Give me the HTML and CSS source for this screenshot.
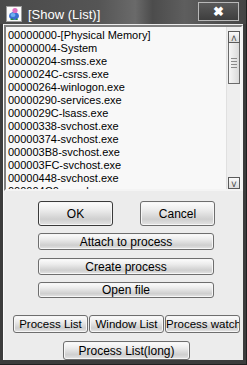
FILE: index.html
```html
<!DOCTYPE html>
<html lang="en">
<head>
    <meta charset="UTF-8">
    <title>[Show (List)]</title>
    <link rel="stylesheet" href="styles.css">
</head>
<body>
    <div class="window">
        <div class="titlebar">
            <div class="app-icon">
                <svg width="16" height="16" viewBox="0 0 16 16">
                    <rect x="0.5" y="0.5" width="15" height="15" fill="#fbfbfb" stroke="#9a9a9a"/>
                    <ellipse cx="8" cy="10" rx="5" ry="4" fill="#3a6fd0"/>
                    <ellipse cx="7" cy="9" rx="2.5" ry="2" fill="#6fb0f0"/>
                    <circle cx="9" cy="4.5" r="2.6" fill="#e070c0"/>
                    <path d="M4 14 L6 12 L8 14 Z" fill="#2a9040"/>
                    <path d="M9 14 L11 12 L12 14 Z" fill="#2a9040"/>
                </svg>
            </div>
            <div class="title">[Show (List)]</div>
            <div class="close-btn">&#x2716;</div>
        </div>
        <div class="client">
            <div class="listbox">
                <div class="items">
                    <div>00000000-[Physical Memory]</div>
                    <div>00000004-System</div>
                    <div>00000204-smss.exe</div>
                    <div>0000024C-csrss.exe</div>
                    <div>00000264-winlogon.exe</div>
                    <div>00000290-services.exe</div>
                    <div>0000029C-lsass.exe</div>
                    <div>00000338-svchost.exe</div>
                    <div>00000374-svchost.exe</div>
                    <div>000003B8-svchost.exe</div>
                    <div>000003FC-svchost.exe</div>
                    <div>00000448-svchost.exe</div>
                    <div>000004C0-spoolsv.exe</div>
                </div>
                <div class="scrollbar">
                    <div class="arrow">&#x02C4;</div>
                    <div class="thumb"><span></span><span></span><span></span><span></span></div>
                    <div class="track"></div>
                    <div class="arrow">&#x02C5;</div>
                </div>
            </div>
            <div class="row ok-row">
                <button class="btn default small">OK</button>
                <button class="btn small">Cancel</button>
            </div>
            <div class="row"><button class="btn wide attach">Attach to process</button></div>
            <div class="row"><button class="btn wide create">Create process</button></div>
            <div class="row"><button class="btn wide open">Open file</button></div>
            <div class="row tabs">
                <button class="btn tab">Process List</button>
                <button class="btn tab">Window List</button>
                <button class="btn tab">Process watch</button>
            </div>
            <div class="row"><button class="btn long">Process List(long)</button></div>
        </div>
    </div>
</body>
</html>
```

FILE: styles.css
```css
body {
    margin: 0;
    padding: 0;
    background: #3c3c3c;
    font-family: "Liberation Sans", Arial, sans-serif;
}
.window {
    width: 247px;
    height: 365px;
    display: flex;
    flex-direction: column;
    background: #3c3c3c;
    box-sizing: border-box;
    border-right: 1px solid #202020;
    border-bottom: 1px solid #202020;
}
.titlebar {
    height: 24px;
    display: flex;
    align-items: center;
    background: linear-gradient(90deg, #4a4a4a 0%, #555 40%, #6a6a6a 55%, #4c4c4c 62%, #5e5e5e 75%, #444 100%);
    flex-shrink: 0;
}
.app-icon {
    width: 16px;
    height: 16px;
    margin-left: 6px;
    margin-top: 4px;
}
.title {
    color: #fff;
    font-size: 13px;
    margin-left: 6px;
    margin-top: 4px;
    flex: 1;
}
.close-btn {
    width: 39px;
    height: 17px;
    margin-right: 7px;
    margin-top: -2px;
    border: 1px solid #b8b8b8;
    background: linear-gradient(#5a5a5a, #3e3e3e);
    color: #fff;
    font-size: 13px;
    font-weight: bold;
    text-align: center;
    line-height: 17px;
}
.client {
    flex: 1;
    margin: 0 3px 4px 3px;
    background: #ececec;
    padding-top: 1px;
    border-left: 1px solid #fafafa;
}
.listbox {
    margin-left: 0;
    width: 239px;
    height: 166px;
    box-sizing: border-box;
    border: 2px solid;
    border-color: #808080 #f4f4f4 #f4f4f4 #808080;
    background: #f8f8f8;
    display: flex;
    overflow: hidden;
}
.items {
    flex: 1;
    padding: 2px 0 0 2px;
    font-size: 11px;
    line-height: 13px;
    color: #000;
    overflow: hidden;
    white-space: nowrap;
}
.scrollbar {
    width: 13px;
    margin-right: 1px;
    display: flex;
    flex-direction: column;
    background: #eeeeee;
    border-left: 1px solid #e0e0e0;
    padding-top: 4px;
}
.arrow {
    width: 10px;
    height: 10px;
    margin-left: 1px;
    border: 1px solid #5a5a5a;
    background: linear-gradient(#fafafa, #dcdcdc);
    font-size: 10px;
    line-height: 14px;
    text-align: center;
    color: #444;
    flex-shrink: 0;
    overflow: hidden;
}
.thumb {
    width: 10px;
    height: 40px;
    margin-left: 1px;
    border: 1px solid #6a6a6a;
    border-top: none;
    background: linear-gradient(90deg, #f6f6f6, #dadada);
    display: flex;
    flex-direction: column;
    align-items: center;
    justify-content: center;
    gap: 2px;
}
.thumb span {
    width: 6px;
    height: 1px;
    background: #8a8a8a;
}
.track {
    flex: 1;
}
.row {
    display: flex;
    margin-top: 8px;
    padding-left: 34px;
}
.ok-row {
    margin-top: 10px;
    gap: 27px;
}
.btn {
    font-family: "Liberation Sans", Arial, sans-serif;
    font-size: 11px;
    color: #000;
    padding: 0;
    white-space: nowrap;
    border: 1px solid #6e6e6e;
    border-radius: 3px;
    background: linear-gradient(#fdfdfd 0%, #ececec 35%, #cfcfcf 75%, #e4e4e4 100%);
    box-shadow: inset 0 0 0 1px #f6f6f6;
}
.small {
    width: 75px;
    height: 25px;
    font-size: 12px;
}
.default {
    border-color: #3a3a3a;
}
.wide {
    width: 176px;
    height: 17px;
    font-size: 12px;
}
.attach {
    margin-top: -1px;
}
.create {
    margin-top: 0;
}
.open {
    margin-top: -1px;
    height: 16px;
}
.tabs {
    margin-top: 17px;
    padding-left: 9px;
    gap: 1px;
}
.tab {
    width: 75px;
    height: 18px;
    font-size: 11.5px;
    overflow: hidden;
}
.long {
    width: 127px;
    height: 19px;
    margin-left: 25px;
    font-size: 12px;
}
```
